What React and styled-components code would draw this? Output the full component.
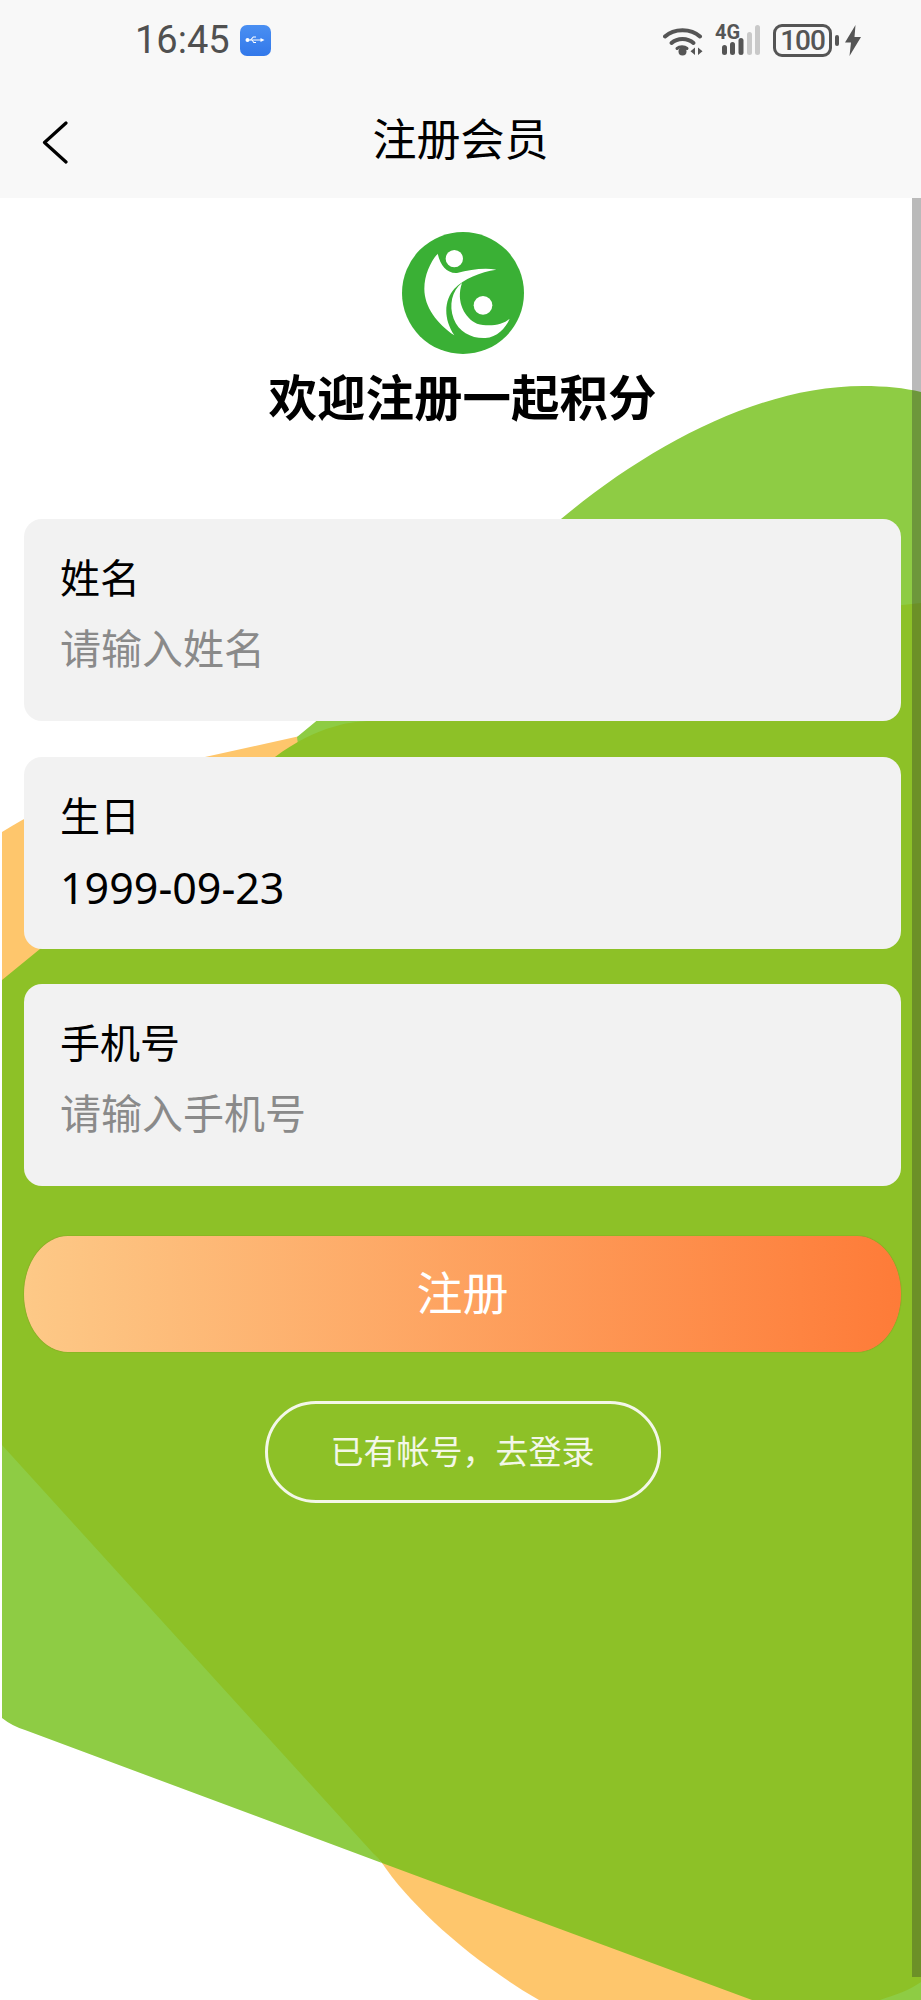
import React from 'react';
import styled, { createGlobalStyle } from 'styled-components';

const GlobalStyle = createGlobalStyle`
	html, body {
		margin: 0;
		padding: 0;
		background: #fff;
		overflow: hidden;
	}
	* {
		box-sizing: border-box;
	}
`;

const cjk = `"Noto Sans", "Noto Sans CJK SC", sans-serif`;

const Page = styled.div`
	width: 921px;
	height: 2000px;
	display: flex;
	flex-direction: column;
	overflow: hidden;
	font-family: ${cjk};
	color: #000;
`;

const Header = styled.header`
	height: 198px;
	flex: none;
	background: #f8f8f8;
`;

const StatusBar = styled.div`
	height: 80px;
	padding: 0 60px 0 135px;
	display: flex;
	align-items: center;
	justify-content: space-between;
`;

const StatusLeft = styled.div`
	display: flex;
	align-items: center;
	gap: 10px;
`;

const Clock = styled.span`
	font-family: Roboto, sans-serif;
	font-size: 38px;
	font-weight: 400;
	line-height: 1;
	color: #505050;
`;

const UsbBadge = styled.span`
	width: 31px;
	height: 31px;
	border-radius: 7px;
	background: linear-gradient(180deg, #4a8ff2, #3278ea);
	display: flex;
	align-items: center;
	justify-content: center;
`;

const StatusRight = styled.div`
	display: flex;
	align-items: center;
`;

const Battery = styled.span`
	width: 59px;
	height: 33px;
	margin-left: 12px;
	border: 3px solid #555;
	border-radius: 9px;
	font-family: Roboto, sans-serif;
	font-size: 28px;
	font-weight: 500;
	letter-spacing: -1px;
	line-height: 27px;
	color: #555;
	text-align: center;
`;

const BatteryNub = styled.span`
	width: 4px;
	height: 11px;
	margin-left: 3px;
	border-radius: 2px;
	background: #555;
`;

const NavBar = styled.nav`
	height: 118px;
	display: grid;
	grid-template-columns: 1fr auto 1fr;
	align-items: center;
`;

const BackButton = styled.span`
	display: flex;
	margin: 6px 0 0 42px;
`;

const NavTitle = styled.h1`
	margin: 0;
	font-size: 44px;
	font-weight: 400;
	line-height: 56px;
`;

const Body = styled.main`
	position: relative;
	flex: 1;
	background: #fff;
`;

const Backdrop = styled.svg`
	position: absolute;
	inset: 0;
	width: 921px;
	height: 1802px;
`;

const ScrollThumb = styled.div`
	position: absolute;
	top: 0;
	right: 0;
	width: 9px;
	height: 1779px;
	background: rgba(40, 40, 40, 0.32);
`;

const Content = styled.div`
	position: relative;
	display: flex;
	flex-direction: column;
	align-items: stretch;
	padding: 34px 20px 0 24px;
`;

const Brand = styled.div`
	display: flex;
	flex-direction: column;
	align-items: center;
`;

const Logo = styled.svg`
	width: 122px;
	height: 122px;
`;

const Welcome = styled.h2`
	margin: 10px 0 89px;
	font-size: 48.5px;
	font-weight: 700;
	line-height: 66px;
`;

const Card = styled.div`
	height: ${(p) => p.$height}px;
	margin-bottom: ${(p) => p.$gap}px;
	padding: 32px 36px 0;
	background: #f2f2f2;
	border-radius: 18px;
`;

const Label = styled.div`
	font-size: 40px;
	line-height: 54px;
`;

const Value = styled.div`
	margin-top: ${(p) => (p.$muted ? 16 : 18)}px;
	font-size: ${(p) => (p.$muted ? 41 : 43)}px;
	line-height: 54px;
	color: ${(p) => (p.$muted ? '#8a8a8a' : '#000')};
`;

const SubmitButton = styled.button`
	height: 116px;
	margin: 14px 0 49px;
	padding: 0 0 9px;
	border: 0;
	border-radius: 44px / 58px;
	background: linear-gradient(90deg, #fdc987, #fe7b38);
	box-shadow: 0 0 1px rgba(120, 70, 20, 0.8);
	font-family: inherit;
	font-size: 46px;
	color: #fff;
`;

const LoginLink = styled.a`
	align-self: center;
	width: 396px;
	height: 102px;
	padding-bottom: 4px;
	border: 3px solid #f3f7e8;
	border-radius: 51px;
	display: flex;
	align-items: center;
	justify-content: center;
	font-size: 33px;
	color: #f3f7e8;
`;

function WifiIcon() {
	return (
		<svg width="40" height="31" viewBox="0 0 40 31" fill="none" stroke="#555">
			<path d="M2 11.5C11 3 28 3 37 11.5" strokeWidth="4" strokeLinecap="round" />
			<path d="M8.5 18C14.5 12.5 24.5 12.5 30.5 18" strokeWidth="4" strokeLinecap="round" />
			<path d="M14 23.5C16.5 21.3 21.5 21.3 24 23.5" strokeWidth="3" strokeLinecap="round" />
			<circle cx="19.5" cy="26.5" r="4" fill="#555" stroke="none" />
			<path d="M32 22.5V30L27.5 26.2ZM35 22.5V30L39.5 26.2Z" fill="#555" stroke="none" />
		</svg>
	);
}

function SignalIcon() {
	return (
		<svg width="46" height="48" viewBox="0 -8 46 48" style={{ marginLeft: 12 }}>
			<text x="0" y="15" fontFamily="Roboto, sans-serif" fontSize="20" fontWeight="700" fill="#555">4G</text>
			<rect x="7" y="21" width="5" height="10" rx="2.5" fill="#555" />
			<rect x="15" y="18" width="5" height="13" rx="2.5" fill="#555" />
			<rect x="23.5" y="14" width="5" height="17" rx="2.5" fill="#555" />
			<rect x="32" y="8" width="5" height="23" rx="2.5" fill="#c9c9c9" />
			<rect x="40" y="1" width="5" height="30" rx="2.5" fill="#c9c9c9" />
		</svg>
	);
}

function BoltIcon() {
	return (
		<svg width="16" height="31" viewBox="0 0 16 31" style={{ marginLeft: 6 }}>
			<path d="M10.5 0L0 17.5H6L4.5 31L16 12H9.5Z" fill="#555" />
		</svg>
	);
}

function UsbIcon() {
	return (
		<svg width="20" height="10" viewBox="0 0 20 10" fill="#fff">
			<circle cx="2.5" cy="5" r="2" />
			<path d="M2 4.5H16V5.5H2Z" />
			<path d="M15.5 3L19.5 5L15.5 7Z" />
			<path d="M5 5L8 1.5H11V2.4H8.5L6 5.2Z" />
			<path d="M6.5 5L8.5 8H11V7.1H9L7.6 5Z" />
		</svg>
	);
}

function BackIcon() {
	return (
		<svg width="26" height="43" viewBox="0 0 26 43" fill="none" stroke="#000" strokeWidth="3.2" strokeLinecap="round" strokeLinejoin="round">
			<path d="M24 2L2.5 21.5L24 41" />
		</svg>
	);
}

function LogoMark() {
	return (
		<Logo viewBox="455 65 366 366">
			<circle cx="638" cy="248" r="183" fill="#3ab035" />
			<g fill="#fff">
				<circle cx="612" cy="145" r="26" />
				<circle cx="698" cy="285" r="28" />
				<path d="M562 130C570 165 590 190 620 188C660 178 700 172 738 178C690 185 640 205 612 235C585 265 575 320 612 375C560 340 522 290 522 235C522 195 540 155 562 130Z" />
				<path d="M635 218C605 240 595 285 610 325C625 365 665 385 705 383C740 380 765 355 778 325C755 345 715 350 680 340C645 325 615 275 635 218Z" />
			</g>
		</Logo>
	);
}

function BackdropShapes() {
	return (
		<Backdrop viewBox="0 198 921 1802">
			<path d="M2 832C60 795 140 772 205 757L300 736V900L2 1000Z" fill="#fec66c" />
			<path d="M382 1863C410 1905 470 1960 539 2000H760L500 1800Z" fill="#fec66c" />
			<path d="M561 519C650 445 760 386 863 386C885 386 905 388 921 392V760H300L297 737Z" fill="#8ecc44" />
			<path d="M2 1400L382 1863L25 1730Q12 1726 2 1718Z" fill="#8ecc44" />
			<path d="M2 980L275 757C295 742 315 732 333 727C345 723 355 722 367 721C500 680 750 620 921 603V2000H752L382 1863L2 1445Z" fill="#8dc127" />
			<path d="M880 2000C895 1995 910 1990 921 1982V2000Z" fill="#8ecc44" />
		</Backdrop>
	);
}

export default function App() {
	return (
		<Page>
			<GlobalStyle />
			<Header>
				<StatusBar>
					<StatusLeft>
						<Clock>16:45</Clock>
						<UsbBadge>
							<UsbIcon />
						</UsbBadge>
					</StatusLeft>
					<StatusRight>
						<WifiIcon />
						<SignalIcon />
						<Battery>100</Battery>
						<BatteryNub />
						<BoltIcon />
					</StatusRight>
				</StatusBar>
				<NavBar>
					<BackButton>
						<BackIcon />
					</BackButton>
					<NavTitle>注册会员</NavTitle>
				</NavBar>
			</Header>
			<Body>
				<BackdropShapes />
				<Content>
					<Brand>
						<LogoMark />
						<Welcome>欢迎注册一起积分</Welcome>
					</Brand>
					<Card $height={202} $gap={36}>
						<Label>姓名</Label>
						<Value $muted>请输入姓名</Value>
					</Card>
					<Card $height={192} $gap={35}>
						<Label>生日</Label>
						<Value>1999-09-23</Value>
					</Card>
					<Card $height={202} $gap={36}>
						<Label>手机号</Label>
						<Value $muted>请输入手机号</Value>
					</Card>
					<SubmitButton>注册</SubmitButton>
					<LoginLink>已有帐号，去登录</LoginLink>
				</Content>
				<ScrollThumb />
			</Body>
		</Page>
	);
}
